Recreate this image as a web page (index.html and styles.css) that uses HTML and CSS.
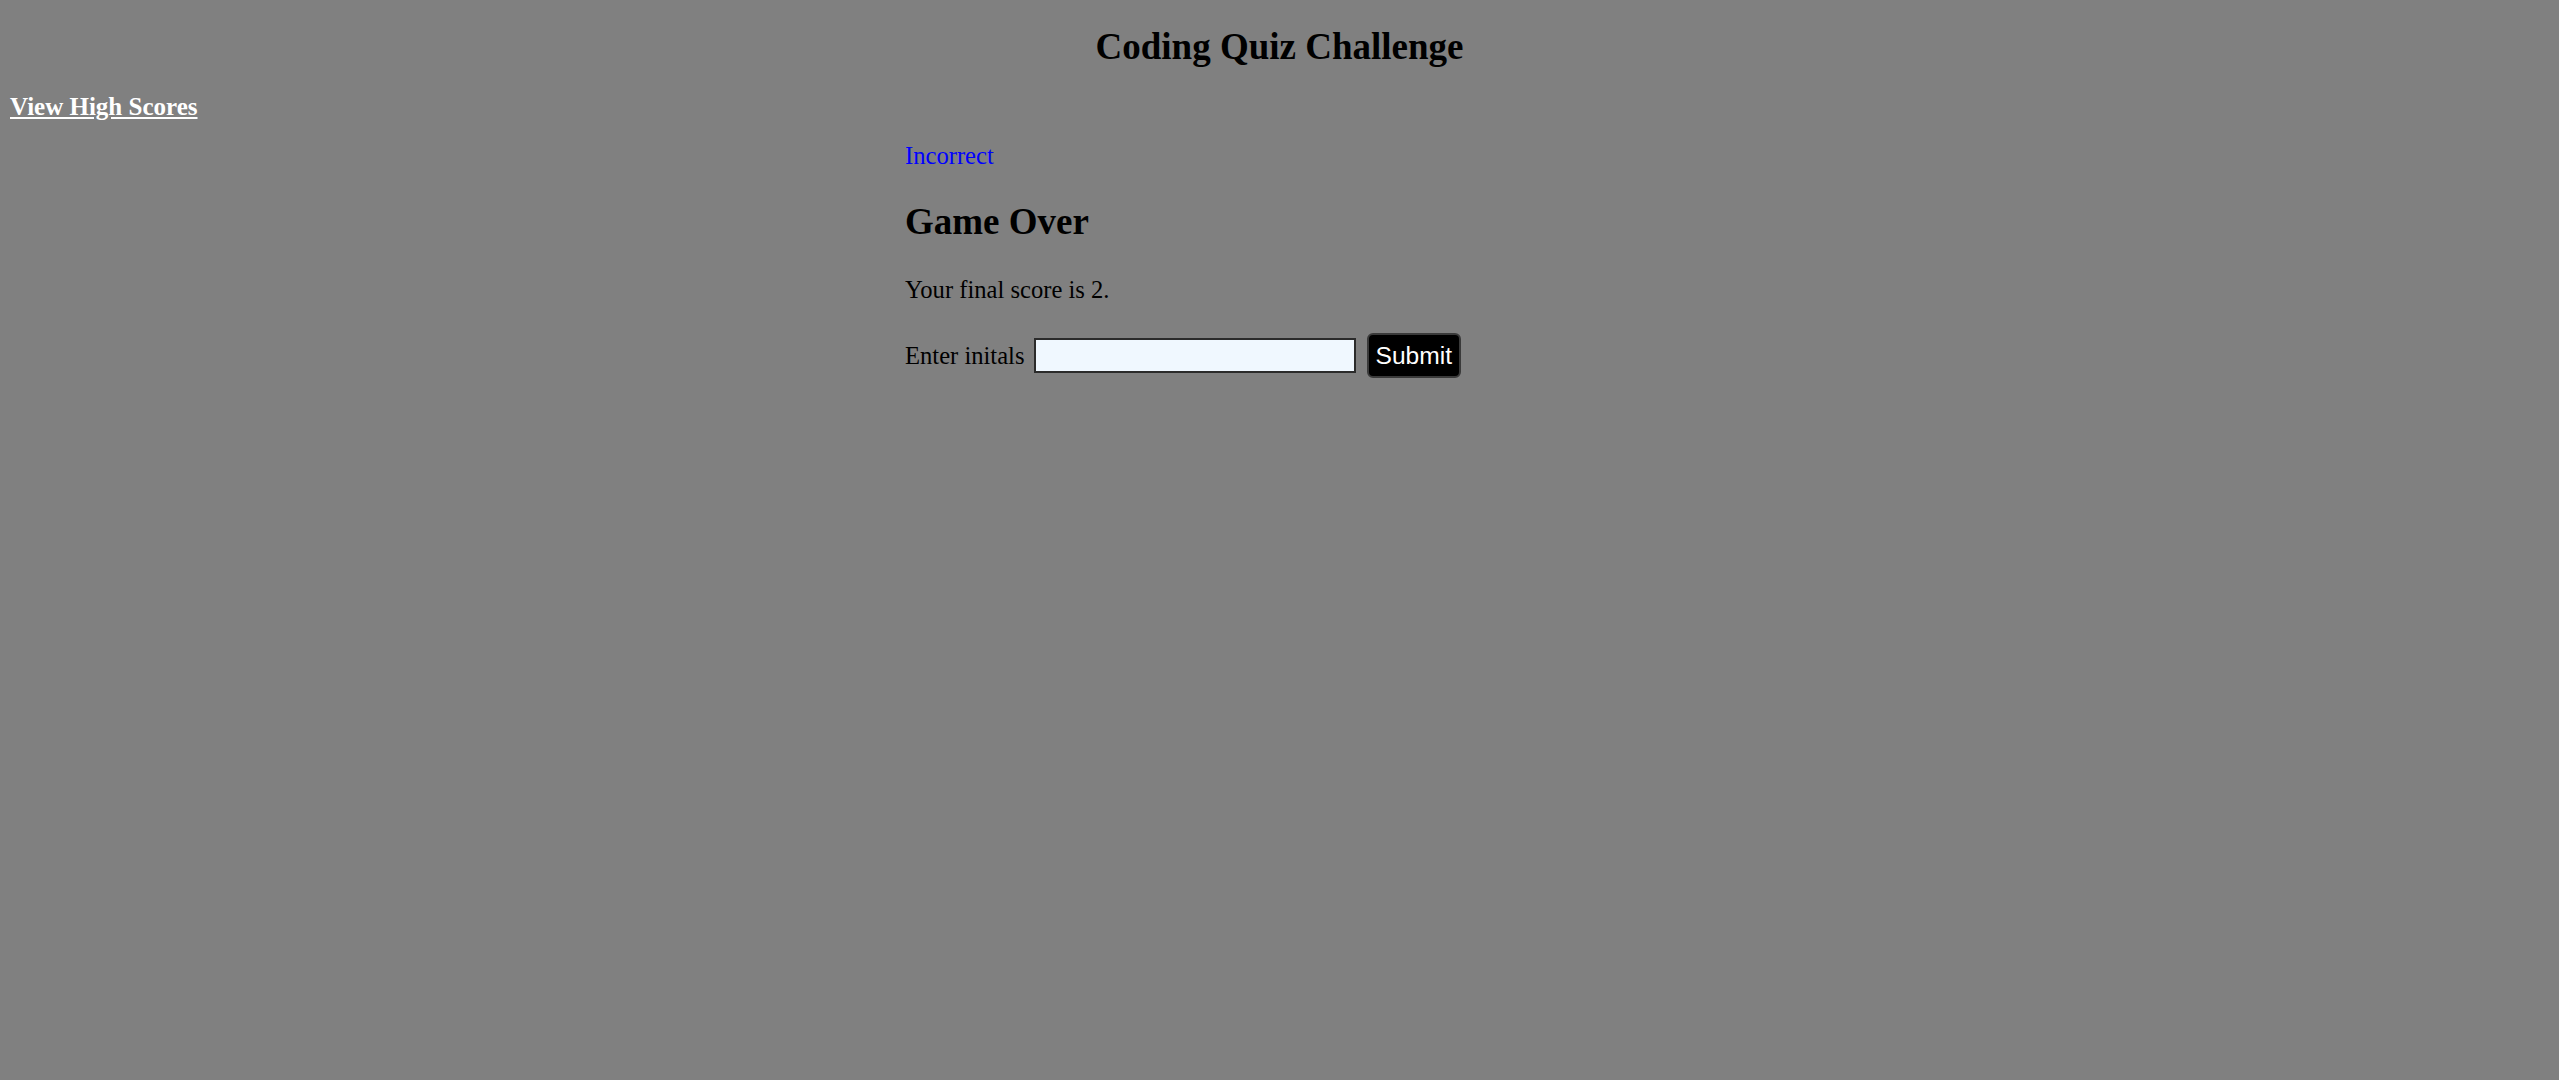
FILE: index.html
```html
<!DOCTYPE html>
<html lang="en">
<head>
<meta charset="utf-8">
<title>Coding Quiz Challenge</title>
<link rel="stylesheet" href="styles.css">
</head>
<body>
<header class="site-header">
  <h1 class="title">Coding Quiz Challenge</h1>
  <a class="scores-link" href="#">View High Scores</a>
</header>
<main class="quiz">
  <p class="feedback">Incorrect</p>
  <h2 class="over">Game Over</h2>
  <p class="score">Your final score is 2.</p>
  <form class="entry">
    <label class="entry-label" for="initials">Enter initals</label>
    <input class="entry-input" id="initials" type="text">
    <button class="entry-btn" type="button">Submit</button>
  </form>
</main>
</body>
</html>
```
FILE: styles.css
```css
html, body {
  margin: 0;
  padding: 0;
}
body {
  background: #808080;
  font-family: "Liberation Serif", "Times New Roman", serif;
  font-size: 24.6px;
  color: #000;
  min-height: 1080px;
}
.site-header {
  display: flex;
  flex-direction: column;
}
.title {
  margin: 24.5px 0 0;
  font-size: 37px;
  line-height: 44px;
  font-weight: bold;
  text-align: center;
}
.scores-link {
  align-self: flex-start;
  margin: 24.5px 0 0 10px;
  font-size: 25px;
  font-weight: bold;
  line-height: 28px;
  color: #fff;
  text-decoration: underline;
}
.quiz {
  width: 749px;
  margin: 21px auto 0;
}
.feedback {
  margin: 0;
  line-height: 28px;
  color: #0000ff;
}
.over {
  margin: 30px 0 0;
  font-size: 37px;
  line-height: 44px;
  font-weight: bold;
}
.score {
  margin: 32px 0 0;
  line-height: 28px;
}
.entry {
  display: flex;
  align-items: center;
  margin: 29px 0 0;
  height: 45px;
}
.entry-label {
  line-height: 28px;
}
.entry-input {
  box-sizing: border-box;
  width: 322px;
  height: 35px;
  margin: 0 0 0 9px;
  padding: 0 4px;
  border: 2px solid #2b2b2b;
  background: #f0f8ff;
  font-size: 20px;
}
.entry-btn {
  box-sizing: border-box;
  height: 45px;
  margin: 0 0 0 11px;
  padding: 0 7px;
  border: 2px solid #3a3a3a;
  border-radius: 6px;
  background: #000;
  color: #fff;
  font-family: "Liberation Sans", Arial, sans-serif;
  font-size: 24.6px;
}
```
